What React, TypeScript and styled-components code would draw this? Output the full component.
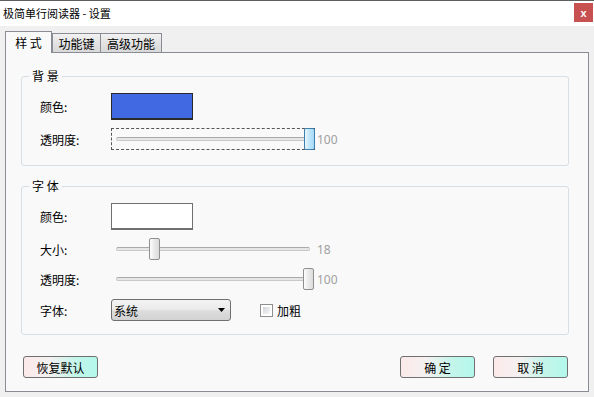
import React from 'react';
import styled, { createGlobalStyle, css } from 'styled-components';

const GlobalStyle = createGlobalStyle`
  html, body {
    margin: 0;
    padding: 0;
    background: #f0f0f0;
  }
  body {
    font-family: "Noto Sans CJK SC", "Noto Sans", sans-serif;
    font-size: 12px;
    color: #000;
  }
  * { box-sizing: border-box; }
`;

const Window = styled.div`
  width: 594px;
  height: 397px;
  border-top: 1px solid #5e5e5e;
  background: #f0f0f0;
  overflow: hidden;
`;

const TitleBar = styled.div`
  height: 25px;
  background: #fff;
  display: flex;
  align-items: center;
  justify-content: space-between;
  padding-left: 3px;
  padding-right: 1px;
`;

const Title = styled.div`
  font-size: 11px;
  line-height: 25px;
`;

const CloseBtn = styled.div`
  width: 19px;
  height: 19px;
  background: #c75050;
  color: #fff;
  font-family: "Liberation Sans", Arial, sans-serif;
  font-weight: bold;
  font-size: 11px;
  display: flex;
  align-items: center;
  justify-content: center;
  align-self: flex-start;
  margin-top: 2px;
`;

const Body = styled.div`
  padding: 5px 0 0 5px;
`;

const TabStrip = styled.div`
  display: flex;
  align-items: flex-end;
  height: 21px;
`;

const Tab = styled.div<{ $active?: boolean; $w: number }>`
  width: ${p => p.$w}px;
  height: 19px;
  border: 1px solid #898c95;
  border-bottom: none;
  margin-left: -1px;
  background: linear-gradient(#f2f2f2, #e3e3e3 50%, #d9d9d9);
  font-size: 12px;
  display: flex;
  align-items: center;
  justify-content: center;
  &:first-child { margin-left: 0; }
  ${p => p.$active && css`
    height: 22px;
    margin-bottom: -1px;
    background: #f9f9f9;
    position: relative;
    z-index: 1;
    margin-right: 1px;
  `}
`;

const Panel = styled.div`
  width: 584px;
  height: 340px;
  border: 1px solid #898c95;
  background: #f9f9f9;
  padding: 15px 19px 0 15px;
`;

const Group = styled.fieldset<{ $bottom: number }>`
  margin: 0 0 12px 0;
  padding: 0;
  border: 1px solid #d5dfe5;
  border-radius: 3px;
  min-width: 0;
  & > div {
    padding-bottom: ${p => p.$bottom}px;
  }
`;

const Legend = styled.legend`
  margin-left: 7px;
  padding: 0 3px;
  font-size: 12px;
  line-height: 16px;
  height: 16px;
`;

const Rows = styled.div`
  display: flex;
  flex-direction: column;
  gap: 8px;
  padding: 9px 0 0 18px;
`;

const Row = styled.div<{ $shift?: number }>`
  display: flex;
  align-items: center;
  margin-top: ${p => p.$shift || 0}px;
`;

const Label = styled.div`
  width: 71px;
  font-size: 12px;
`;

const Swatch = styled.div<{ $color: string; $edge: string }>`
  width: 82px;
  height: 27px;
  background: ${p => p.$color};
  border: 1px solid ${p => p.$edge};
  border-bottom-width: 2px;
`;

const SliderBox = styled.div<{ $focused?: boolean }>`
  width: 204px;
  height: 22px;
  border: 1px dashed ${p => (p.$focused ? '#555' : 'transparent')};
  display: flex;
  align-items: center;
  padding: 0 4px;
  position: relative;
`;

const Track = styled.div`
  flex: 1;
  height: 4px;
  border: 1px solid #c9c9c9;
  border-top-color: #a9a9a9;
  background: #e6e6e6;
  border-radius: 2px;
`;

const Thumb = styled.div<{ $focused?: boolean }>`
  position: absolute;
  top: -1px;
  width: 11px;
  height: 22px;
  border: 1px solid ${p => (p.$focused ? '#3c7fb1' : '#8f8f8f')};
  border-radius: 2px;
  background: ${p =>
    p.$focused
      ? 'linear-gradient(90deg, #eaf6fd, #bee6fd 50%, #a7d9f5)'
      : 'linear-gradient(90deg, #fdfdfd, #e9e9e9 50%, #dcdcdc)'};
`;

const Value = styled.span`
  margin-left: 2px;
  color: #a0a0a0;
  font-family: "Noto Sans", "Liberation Sans", sans-serif;
  font-size: 12px;
`;

const Combo = styled.div`
  width: 120px;
  height: 22px;
  border: 1px solid #707070;
  border-radius: 3px;
  background: linear-gradient(#f3f3f3 0%, #ebebeb 45%, #dddddd 55%, #d2d2d2 100%);
  display: flex;
  align-items: center;
  justify-content: space-between;
  padding: 0 5px 0 2px;
  font-size: 12px;
`;

const Check = styled.div`
  width: 13px;
  height: 13px;
  margin-left: 29px;
  border: 1px solid #8e8f8f;
  background: #fff;
  padding: 2px;
  &::after {
    content: '';
    display: block;
    width: 100%;
    height: 100%;
    background: linear-gradient(135deg, #d2d5da, #f8f8f8);
  }
`;

const CheckText = styled.span`
  margin-left: 4px;
  font-size: 12px;
`;

const ButtonRow = styled.div`
  display: flex;
  justify-content: space-between;
  margin: 21px 1px 0 2px;
`;

const BtnGroup = styled.div`
  display: flex;
  gap: 18px;
`;

const Button = styled.div`
  width: 75px;
  height: 22px;
  border: 1px solid #707070;
  border-radius: 3px;
  background: linear-gradient(90deg, #fce9e9 0%, #f4f1f1 35%, #c4f5ea 70%, #b3f8ec 100%);
  display: flex;
  align-items: center;
  justify-content: center;
  font-size: 12px;
`;

const Slider: React.FC<{ frac: number; value: string; focused?: boolean }> = ({ frac, value, focused }) => (
  <>
    <SliderBox $focused={focused}>
      <Track />
      <Thumb $focused={focused} style={{ left: Math.round(frac * 192) }} />
    </SliderBox>
    <Value>{value}</Value>
  </>
);

const App: React.FC = () => (
  <>
    <GlobalStyle />
    <Window>
      <TitleBar>
        <Title>极简单行阅读器 - 设置</Title>
        <CloseBtn>x</CloseBtn>
      </TitleBar>
      <Body>
        <TabStrip>
          <Tab $active $w={47}>样 式</Tab>
          <Tab $w={49}>功能键</Tab>
          <Tab $w={62}>高级功能</Tab>
        </TabStrip>
        <Panel>
          <Group $bottom={15}>
            <Legend>背 景</Legend>
            <Rows>
              <Row>
                <Label>颜色:</Label>
                <Swatch $color="#4169e1" $edge="#2a2a2a" />
              </Row>
              <Row>
                <Label>透明度:</Label>
                <Slider frac={1} value="100" focused />
              </Row>
            </Rows>
          </Group>
          <Group $bottom={13}>
            <Legend>字 体</Legend>
            <Rows>
              <Row>
                <Label>颜色:</Label>
                <Swatch $color="#ffffff" $edge="#707070" />
              </Row>
              <Row>
                <Label>大小:</Label>
                <Slider frac={0.193} value="18" />
              </Row>
              <Row>
                <Label>透明度:</Label>
                <Slider frac={0.995} value="100" />
              </Row>
              <Row $shift={1}>
                <Label>字体:</Label>
                <Combo>
                  <span>系统</span>
                  <svg width="7" height="4" viewBox="0 0 7 4">
                    <path d="M0 0h7L3.5 4z" fill="#000" />
                  </svg>
                </Combo>
                <Check />
                <CheckText>加粗</CheckText>
              </Row>
            </Rows>
          </Group>
          <ButtonRow>
            <Button>恢复默认</Button>
            <BtnGroup>
              <Button>确 定</Button>
              <Button>取 消</Button>
            </BtnGroup>
          </ButtonRow>
        </Panel>
      </Body>
    </Window>
  </>
);

export default App;
